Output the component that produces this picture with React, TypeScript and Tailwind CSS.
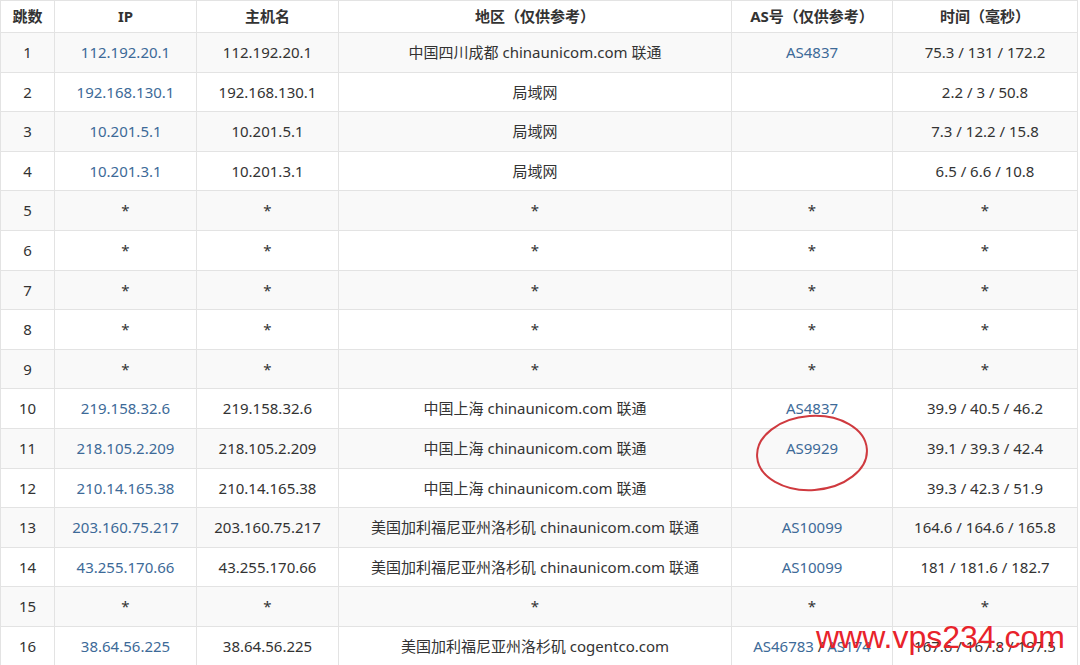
import React from 'react';

type Hop = {
  n: number;
  ip: string;
  host: string;
  region: string;
  as: string;
  time: string;
};

const hops: Hop[] = [
  { n: 1, ip: '112.192.20.1', host: '112.192.20.1', region: '中国四川成都 chinaunicom.com 联通', as: 'AS4837', time: '75.3 / 131 / 172.2' },
  { n: 2, ip: '192.168.130.1', host: '192.168.130.1', region: '局域网', as: '', time: '2.2 / 3 / 50.8' },
  { n: 3, ip: '10.201.5.1', host: '10.201.5.1', region: '局域网', as: '', time: '7.3 / 12.2 / 15.8' },
  { n: 4, ip: '10.201.3.1', host: '10.201.3.1', region: '局域网', as: '', time: '6.5 / 6.6 / 10.8' },
  { n: 5, ip: '*', host: '*', region: '*', as: '*', time: '*' },
  { n: 6, ip: '*', host: '*', region: '*', as: '*', time: '*' },
  { n: 7, ip: '*', host: '*', region: '*', as: '*', time: '*' },
  { n: 8, ip: '*', host: '*', region: '*', as: '*', time: '*' },
  { n: 9, ip: '*', host: '*', region: '*', as: '*', time: '*' },
  { n: 10, ip: '219.158.32.6', host: '219.158.32.6', region: '中国上海 chinaunicom.com 联通', as: 'AS4837', time: '39.9 / 40.5 / 46.2' },
  { n: 11, ip: '218.105.2.209', host: '218.105.2.209', region: '中国上海 chinaunicom.com 联通', as: 'AS9929', time: '39.1 / 39.3 / 42.4' },
  { n: 12, ip: '210.14.165.38', host: '210.14.165.38', region: '中国上海 chinaunicom.com 联通', as: '', time: '39.3 / 42.3 / 51.9' },
  { n: 13, ip: '203.160.75.217', host: '203.160.75.217', region: '美国加利福尼亚州洛杉矶 chinaunicom.com 联通', as: 'AS10099', time: '164.6 / 164.6 / 165.8' },
  { n: 14, ip: '43.255.170.66', host: '43.255.170.66', region: '美国加利福尼亚州洛杉矶 chinaunicom.com 联通', as: 'AS10099', time: '181 / 181.6 / 182.7' },
  { n: 15, ip: '*', host: '*', region: '*', as: '*', time: '*' },
  { n: 16, ip: '38.64.56.225', host: '38.64.56.225', region: '美国加利福尼亚州洛杉矶 cogentco.com', as: 'AS46783 / AS174', time: '167.6 / 167.8 / 197.5' },
];

const cell = 'border border-[#e3e3e3] text-center align-middle px-1';
const link = 'text-[#3d6a98]';

export default function App() {
  return (
    <div
      className="relative w-[1080px] h-[665px] overflow-hidden bg-white text-[15px] text-[#333]"
      style={{ fontFamily: '"Noto Sans", "Noto Sans CJK SC", sans-serif' }}
    >
      <table className="table-fixed border-collapse w-[1077px]">
        <colgroup>
          <col className="w-[54px]" />
          <col className="w-[142px]" />
          <col className="w-[142px]" />
          <col className="w-[393px]" />
          <col className="w-[161px]" />
          <col className="w-[185px]" />
        </colgroup>
        <thead>
          <tr className="h-[32px] font-bold">
            <th className={cell}>跳数</th>
            <th className={cell}>IP</th>
            <th className={cell}>主机名</th>
            <th className={cell}>地区（仅供参考）</th>
            <th className={cell}>AS号（仅供参考）</th>
            <th className={cell}>时间（毫秒）</th>
          </tr>
        </thead>
        <tbody>
          {hops.map(h => (
            <tr key={h.n} className={`h-[39.6px] ${h.n % 2 === 1 ? 'bg-[#f9f9f9]' : 'bg-white'}`}>
              <td className={cell}>{h.n}</td>
              <td className={cell}>
                <span className={h.ip === '*' ? '' : link}>{h.ip}</span>
              </td>
              <td className={cell}>{h.host}</td>
              <td className={cell}>{h.region}</td>
              <td className={cell}>
                {h.as === '*' ? (
                  '*'
                ) : h.as.includes('/') ? (
                  <>
                    <span className={link}>AS46783</span> / <span className={link}>AS174</span>
                  </>
                ) : (
                  <span className={link}>{h.as}</span>
                )}
              </td>
              <td className={cell}>{h.time}</td>
            </tr>
          ))}
        </tbody>
      </table>

      {/* red circle annotation */}
      <svg className="absolute left-[754px] top-[413px]" width="116" height="80" viewBox="0 0 116 80">
        <ellipse cx="58" cy="40" rx="55" ry="37" fill="none" stroke="#cf3a3f" strokeWidth="2" transform="rotate(-4 58 40)" />
      </svg>

      {/* watermark */}
      <div
        className="absolute left-[816px] top-[621px] text-[32px] leading-none text-[#e8232b]"
        style={{ fontFamily: '"Liberation Sans", Arial, sans-serif' }}
      >
        www.vps234.com
      </div>
    </div>
  );
}
